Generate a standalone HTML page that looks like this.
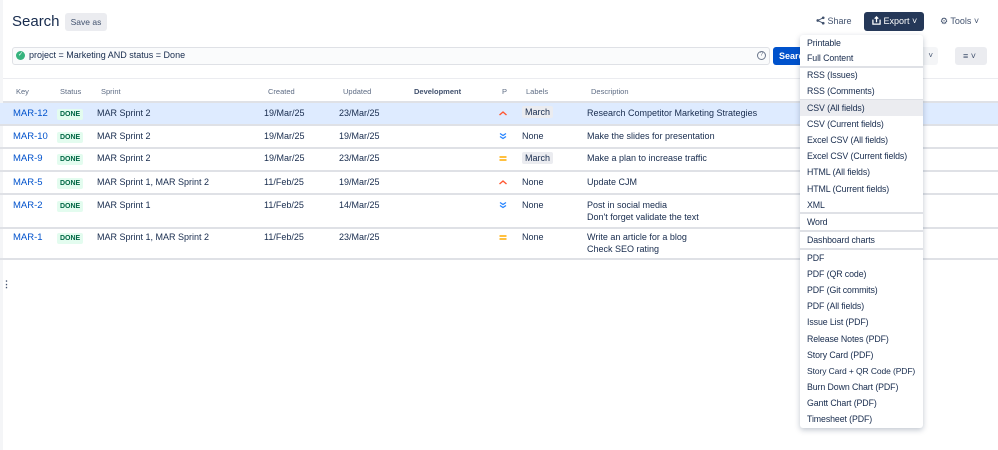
<!DOCTYPE html>
<html><head><style>
*{margin:0;padding:0;box-sizing:border-box}
body{width:998px;height:450px;overflow:hidden;background:#fff;font-family:"Liberation Sans",sans-serif;color:#172b4d;font-size:9px;position:relative}
.a{position:absolute;white-space:nowrap}
.h{position:absolute;top:87px;font-size:7.5px;color:#5e6c84}
.row{position:absolute;left:0;width:998px;border-bottom:2px solid #dfe1e6}
.k{color:#0052cc;font-size:9.5px}
.b{position:absolute;background:#e3fcef;color:#006644;font-weight:bold;font-size:7px;padding:2px 3px;border-radius:2px;left:57px}
.lb{position:absolute;left:522px;background:#ebecf0;border-radius:2px;padding:1px 3px;font-size:9px}
.menu{position:absolute;left:800px;top:35px;width:123px;height:393px;background:#fff;box-shadow:0 2px 6px rgba(9,30,66,.25);border-radius:3px}
.mi{position:absolute;left:0;width:123px;height:16px;padding-left:7px;line-height:16px;font-size:8.8px;white-space:nowrap;letter-spacing:-0.1px}
.sep{position:absolute;left:0;width:123px;border-top:2px solid #dfe1e6}
.pi{position:absolute;left:498px}
</style></head><body>
<div class="a" style="left:0;top:0;width:3px;height:450px;background:#f4f5f7"></div>
<div class="a" style="left:12px;top:13px;font-size:15px">Search</div>
<div class="a" style="left:65px;top:13px;width:42px;height:18px;background:#ebecf0;border-radius:3px;font-size:8.5px;line-height:18px;text-align:center;color:#42526e">Save as</div>

<div class="a" style="left:816px;top:16px;font-size:9px;color:#42526e"><svg width="9" height="9" viewBox="0 0 10 10" style="vertical-align:-1px"><circle cx="2" cy="5" r="1.5" fill="#42526e"/><circle cx="8" cy="2" r="1.5" fill="#42526e"/><circle cx="8" cy="8" r="1.5" fill="#42526e"/><path d="M2 5L8 2M2 5L8 8" stroke="#42526e"/></svg> Share</div>
<div class="a" style="left:864px;top:12px;width:60px;height:19px;background:#253858;border-radius:3px;color:#fff;font-size:9px;line-height:19px;padding-left:8px"><svg width="9" height="9" viewBox="0 0 10 10" style="vertical-align:-1px"><path d="M1 4v5h8V4M5 7V1M3 3l2-2 2 2" stroke="#fff" fill="none" stroke-width="1.4"/></svg> Export ˅</div>
<div class="a" style="left:940px;top:16px;font-size:9px;color:#42526e">⚙ Tools ˅</div>

<div class="a" style="left:12px;top:47px;width:758px;height:18px;border:1px solid #dfe1e6;border-radius:3px;background:#fafbfc"></div>
<div class="a" style="left:16px;top:51px;width:9px;height:9px;border-radius:50%;background:#36b37e;color:#fff;font-size:6px;line-height:9px;text-align:center">✓</div>
<div class="a" style="left:29px;top:50px;font-size:9px">project = Marketing AND status = Done</div>
<div class="a" style="left:757px;top:51px;width:9px;height:9px;border:1px solid #6b778c;border-radius:50%;font-size:6px;line-height:7px;text-align:center;color:#6b778c">?</div>
<div class="a" style="left:773px;top:47px;width:30px;height:18px;background:#0052cc;border-radius:3px;color:#fff;font-weight:bold;font-size:9px;line-height:18px;padding-left:6px;overflow:hidden">Search</div>
<div class="a" style="left:905px;top:47px;width:33px;height:18px;background:#f4f5f7;border-radius:3px;text-align:right;padding-right:5px;line-height:18px;font-size:8px;color:#42526e">˅</div>
<div class="a" style="left:955px;top:47px;width:32px;height:18px;background:#ebecf0;border-radius:3px;line-height:18px;font-size:9px;padding-left:8px;color:#42526e">≡ ˅</div>
<div class="a" style="left:3px;top:78px;width:995px;border-top:1px solid #ebecf0"></div>

<div class="h" style="left:16px">Key</div>
<div class="h" style="left:60px">Status</div>
<div class="h" style="left:101px">Sprint</div>
<div class="h" style="left:268px">Created</div>
<div class="h" style="left:343px">Updated</div>
<div class="h" style="left:414px;font-weight:bold;color:#42526e">Development</div>
<div class="h" style="left:502px">P</div>
<div class="h" style="left:526px">Labels</div>
<div class="h" style="left:591px">Description</div>
<div class="a" style="left:3px;top:101px;width:995px;border-top:2px solid #dfe1e6"></div>

<div class="row" style="top:103px;height:23px;background:#deebff"></div>
<div class="row" style="top:126px;height:23px"></div>
<div class="row" style="top:149px;height:23px"></div>
<div class="row" style="top:172px;height:23px"></div>
<div class="row" style="top:195px;height:34px"></div>
<div class="row" style="top:229px;height:31px"></div>

<div class="a k" style="left:13px;top:108px">MAR-12</div><div class="b" style="top:109px">DONE</div>
<div class="a" style="left:97px;top:108px">MAR Sprint 2</div><div class="a" style="left:264px;top:108px">19/Mar/25</div><div class="a" style="left:339px;top:108px">23/Mar/25</div>
<svg class="pi" style="top:110px" width="10" height="6" viewBox="0 0 10 6"><path d="M1.5 5L5 2 8.5 5" stroke="#ff5630" stroke-width="1.4" fill="none"/></svg>
<div class="lb" style="top:106px">March</div><div class="a" style="left:587px;top:108px">Research Competitor Marketing Strategies</div>

<div class="a k" style="left:13px;top:131px">MAR-10</div><div class="b" style="top:132px">DONE</div>
<div class="a" style="left:97px;top:131px">MAR Sprint 2</div><div class="a" style="left:264px;top:131px">19/Mar/25</div><div class="a" style="left:339px;top:131px">19/Mar/25</div>
<svg class="pi" style="top:132px" width="10" height="8" viewBox="0 0 10 8"><path d="M2 1.5L5 3.5 8 1.5M2 4.5L5 6.5 8 4.5" stroke="#2684ff" stroke-width="1.3" fill="none"/></svg>
<div class="a" style="left:522px;top:131px">None</div><div class="a" style="left:587px;top:131px">Make the slides for presentation</div>

<div class="a k" style="left:13px;top:153px">MAR-9</div><div class="b" style="top:154px">DONE</div>
<div class="a" style="left:97px;top:153px">MAR Sprint 2</div><div class="a" style="left:264px;top:153px">19/Mar/25</div><div class="a" style="left:339px;top:153px">23/Mar/25</div>
<svg class="pi" style="top:155px" width="10" height="7" viewBox="0 0 10 7"><path d="M1.5 2h7M1.5 5h7" stroke="#ffab00" stroke-width="1.4"/></svg>
<div class="lb" style="top:152px">March</div><div class="a" style="left:587px;top:153px">Make a plan to increase traffic</div>

<div class="a k" style="left:13px;top:177px">MAR-5</div><div class="b" style="top:178px">DONE</div>
<div class="a" style="left:97px;top:177px">MAR Sprint 1, MAR Sprint 2</div><div class="a" style="left:264px;top:177px">11/Feb/25</div><div class="a" style="left:339px;top:177px">19/Mar/25</div>
<svg class="pi" style="top:179px" width="10" height="6" viewBox="0 0 10 6"><path d="M1.5 5L5 2 8.5 5" stroke="#ff5630" stroke-width="1.4" fill="none"/></svg>
<div class="a" style="left:522px;top:177px">None</div><div class="a" style="left:587px;top:177px">Update CJM</div>

<div class="a k" style="left:13px;top:200px">MAR-2</div><div class="b" style="top:201px">DONE</div>
<div class="a" style="left:97px;top:200px">MAR Sprint 1</div><div class="a" style="left:264px;top:200px">11/Feb/25</div><div class="a" style="left:339px;top:200px">14/Mar/25</div>
<svg class="pi" style="top:201px" width="10" height="8" viewBox="0 0 10 8"><path d="M2 1.5L5 3.5 8 1.5M2 4.5L5 6.5 8 4.5" stroke="#2684ff" stroke-width="1.3" fill="none"/></svg>
<div class="a" style="left:522px;top:200px">None</div><div class="a" style="left:587px;top:199px;line-height:12px">Post in social media<br>Don't forget validate the text</div>

<div class="a k" style="left:13px;top:232px">MAR-1</div><div class="b" style="top:233px">DONE</div>
<div class="a" style="left:97px;top:232px">MAR Sprint 1, MAR Sprint 2</div><div class="a" style="left:264px;top:232px">11/Feb/25</div><div class="a" style="left:339px;top:232px">23/Mar/25</div>
<svg class="pi" style="top:234px" width="10" height="7" viewBox="0 0 10 7"><path d="M1.5 2h7M1.5 5h7" stroke="#ffab00" stroke-width="1.4"/></svg>
<div class="a" style="left:522px;top:232px">None</div><div class="a" style="left:587px;top:231px;line-height:12px">Write an article for a blog<br>Check SEO rating</div>

<div class="a" style="left:2px;top:279px;font-size:9px;color:#42526e;font-weight:bold">⋮</div>

<div class="menu">
<div class="mi" style="top:0px">Printable</div>
<div class="mi" style="top:15px">Full Content</div>
<div class="sep" style="top:31px"></div>
<div class="mi" style="top:32px">RSS (Issues)</div>
<div class="mi" style="top:48px">RSS (Comments)</div>
<div class="sep" style="top:64px"></div>
<div class="mi" style="top:65px;background:#ebecf0">CSV (All fields)</div>
<div class="mi" style="top:81px">CSV (Current fields)</div>
<div class="mi" style="top:97px">Excel CSV (All fields)</div>
<div class="mi" style="top:113px">Excel CSV (Current fields)</div>
<div class="mi" style="top:129px">HTML (All fields)</div>
<div class="mi" style="top:146px">HTML (Current fields)</div>
<div class="mi" style="top:162px">XML</div>
<div class="sep" style="top:177px"></div>
<div class="mi" style="top:179px">Word</div>
<div class="sep" style="top:195px"></div>
<div class="mi" style="top:197px">Dashboard charts</div>
<div class="sep" style="top:213px"></div>
<div class="mi" style="top:215px">PDF</div>
<div class="mi" style="top:231px">PDF (QR code)</div>
<div class="mi" style="top:247px">PDF (Git commits)</div>
<div class="mi" style="top:263px">PDF (All fields)</div>
<div class="mi" style="top:279px">Issue List (PDF)</div>
<div class="mi" style="top:296px">Release Notes (PDF)</div>
<div class="mi" style="top:312px">Story Card (PDF)</div>
<div class="mi" style="top:328px;font-size:8.5px">Story Card + QR Code (PDF)</div>
<div class="mi" style="top:344px">Burn Down Chart (PDF)</div>
<div class="mi" style="top:360px">Gantt Chart (PDF)</div>
<div class="mi" style="top:376px">Timesheet (PDF)</div>
</div>
</body></html>
